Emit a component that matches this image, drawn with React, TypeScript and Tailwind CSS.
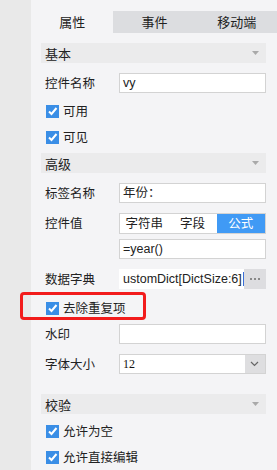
import React from "react";

const font = { fontFamily: '"Noto Sans CJK SC", "Liberation Sans", sans-serif' };

function Caret() {
  return (
    <svg width="7" height="4" viewBox="0 0 7 4" className="shrink-0">
      <path d="M0 0 L7 0 L3.5 4 Z" fill="#a9a9a9" />
    </svg>
  );
}

function Check() {
  return (
    <div className="w-[13px] h-[13px] bg-[#3a8ee6] flex items-center justify-center shrink-0">
      <svg width="11" height="11" viewBox="0 0 11 11">
        <path d="M2 5.5 L4.5 8 L9.5 2" stroke="#fff" strokeWidth="2" fill="none" />
      </svg>
    </div>
  );
}

function Section({ title, className = "" }: { title: string; className?: string }) {
  return (
    <div className={`h-[20px] bg-[#ebebec] flex items-center justify-between pl-[4px] pr-[7px] ${className}`}>
      <span className="text-[13px] text-[#222] leading-none">{title}</span>
      <Caret />
    </div>
  );
}

function CheckRow({ label, className = "", children }: { label: string; className?: string; children?: React.ReactNode }) {
  return (
    <div className={`relative h-[26px] flex items-center pl-[5px] gap-[4px] ${className}`}>
      <Check />
      <span className="text-[12.5px] text-[#222] leading-none">{label}</span>
      {children}
    </div>
  );
}

function Row({ label, className = "", children }: { label: string; className?: string; children: React.ReactNode }) {
  return (
    <div className={`flex ${className}`}>
      <div className="w-[78px] pl-[4px] h-[20px] flex items-center text-[12.5px] text-[#222] shrink-0">{label}</div>
      <div className="flex-1">{children}</div>
    </div>
  );
}

function Input({ value = "", className = "" }: { value?: string; className?: string }) {
  return (
    <div
      className={`h-[20px] bg-white border border-[#d3d3d3] flex items-center px-[3px] text-[12.5px] text-[#222] ${className}`}
      style={{ fontFamily: '"Liberation Sans", "Noto Sans CJK SC", sans-serif' }}
    >
      {value}
    </div>
  );
}

export default function App() {
  return (
    <div className="w-[277px] h-[470px] flex overflow-hidden" style={font}>
      <div className="w-[31px] bg-[#e9e9e9] shrink-0" />
      <div className="flex-1 bg-[#f4f4f6] flex flex-col">
        <div className="mt-[11px] h-[24px] flex text-[13px] text-[#222]">
          <div className="flex-1 flex items-center justify-center bg-[#f4f4f6]">属性</div>
          <div className="flex-1 flex items-center justify-center bg-[#dcdde0]">事件</div>
          <div className="flex-1 flex items-center justify-center bg-[#dcdde0]">移动端</div>
        </div>
        <div className="pl-[10px] pr-[12px] flex flex-col">
          <Section title="基本" className="mt-[10px]" />
          <Row label="控件名称" className="mt-[10px]">
            <Input value="vy" />
          </Row>
          <CheckRow label="可用" className="mt-[5px]" />
          <CheckRow label="可见" />
          <Section title="高级" className="mt-[3px]" />
          <Row label="标签名称" className="mt-[10px]">
            <Input value="年份：" />
          </Row>
          <Row label="控件值" className="mt-[10px]">
            <div className="h-[21px] flex border border-[#d3d3d3] bg-white text-[12.5px] text-[#222]">
              <div className="flex-1 flex items-center justify-center">字符串</div>
              <div className="flex-1 flex items-center justify-center">字段</div>
              <div className="flex-1 flex items-center justify-center bg-[#409af5] text-white">公式</div>
            </div>
            <Input value="=year()" className="mt-[5px]" />
          </Row>
          <Row label="数据字典" className="mt-[10px]">
            <div className="h-[20px] flex">
              <div
                className="flex-1 bg-white flex items-center pl-[4px] text-[12.5px] text-[#222] overflow-hidden whitespace-nowrap"
                style={{ fontFamily: '"Liberation Sans", sans-serif' }}
              >
                ustomDict[DictSize:6]
                <span className="w-px h-[14px] bg-[#3a6fd8] ml-[1px] shrink-0" />
              </div>
              <div className="w-[22px] bg-[#dddde0] flex items-center justify-center gap-[2px] shrink-0">
                <span className="w-[2px] h-[2px] bg-[#888]" />
                <span className="w-[2px] h-[2px] bg-[#888]" />
                <span className="w-[2px] h-[2px] bg-[#888]" />
              </div>
            </div>
          </Row>
          <CheckRow label="去除重复项" className="mt-[6px]">
            <div className="absolute left-[-21px] top-[-3px] w-[126px] h-[28px] border-[3px] border-[#f21c1c] rounded-[4px]" />
          </CheckRow>
          <Row label="水印" className="mt-[3px]">
            <Input />
          </Row>
          <Row label="字体大小" className="mt-[10px]">
            <div className="h-[20px] flex border border-[#d3d3d3] bg-white">
              <div
                className="flex-1 flex items-center pl-[3px] text-[12px] text-[#111]"
                style={{ fontFamily: '"Liberation Serif", serif' }}
              >
                12
              </div>
              <div className="w-[20px] bg-[#dedee0] flex items-center justify-center">
                <svg width="9" height="6" viewBox="0 0 9 6">
                  <path d="M1 1 L4.5 4.5 L8 1" stroke="#666" strokeWidth="1.2" fill="none" />
                </svg>
              </div>
            </div>
          </Row>
          <Section title="校验" className="mt-[20px]" />
          <CheckRow label="允许为空" className="mt-[4px]" />
          <CheckRow label="允许直接编辑" />
        </div>
      </div>
    </div>
  );
}
